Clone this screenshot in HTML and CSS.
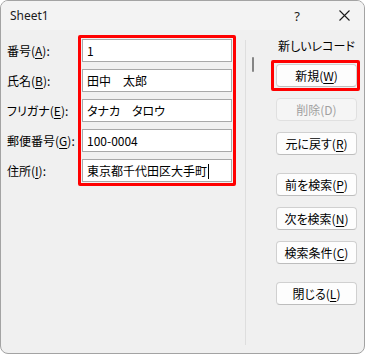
FILE: index.html
```html
<!DOCTYPE html>
<html lang="ja">
<head>
<meta charset="utf-8">
<title>Sheet1</title>
<link rel="stylesheet" href="styles.css">
</head>
<body>
<div class="window">
  <div class="titlebar">
    <span class="title">Sheet1</span>
    <span class="help">?</span>
    <span class="close"><svg width="11" height="11" viewBox="0 0 11 11"><path d="M0.5 0.5 L10.5 10.5 M10.5 0.5 L0.5 10.5" stroke="#1a1a1a" stroke-width="1.1" fill="none"/></svg></span>
  </div>
  <div class="body">
    <div class="labels">
      <div class="label">番号(<u>A</u>):</div>
      <div class="label">氏名(<u>B</u>):</div>
      <div class="label">フリガナ(<u>E</u>):</div>
      <div class="label">郵便番号(<u>G</u>):</div>
      <div class="label">住所(<u>I</u>):</div>
    </div>
    <div class="fields">
      <div class="field">1</div>
      <div class="field">田中　太郎</div>
      <div class="field">タナカ　タロウ</div>
      <div class="field">100-0004</div>
      <div class="field">東京都千代田区大手町<span class="caret"></span></div>
    </div>
    <div class="scroll"><div class="thumb"></div></div>
    <div class="actions">
      <div class="caption">新しいレコード</div>
      <div class="btn hl">新規(<u>W</u>)</div>
      <div class="btn disabled">削除(D)</div>
      <div class="btn">元に戻す(<u>R</u>)</div>
      <div class="btn group">前を検索(<u>P</u>)</div>
      <div class="btn">次を検索(<u>N</u>)</div>
      <div class="btn">検索条件(<u>C</u>)</div>
      <div class="btn group">閉じる(<u>L</u>)</div>
    </div>
  </div>
</div>
</body>
</html>
```
FILE: styles.css
```css
html, body {
  margin: 0;
  padding: 0;
  background: #ffffff;
}
.window {
  box-sizing: border-box;
  width: 365px;
  height: 354px;
  border: 1px solid #a3a3a3;
  border-radius: 8px;
  background: #f0f0f0;
  overflow: hidden;
  display: flex;
  flex-direction: column;
  font-family: "Noto Sans CJK JP", sans-serif;
  font-feature-settings: "palt";
  font-size: 12px;
  color: #000;
}
.titlebar {
  height: 29px;
  flex: none;
  display: flex;
  align-items: center;
  background: #f3f3f3;
}
.title {
  font-family: "Noto Sans", sans-serif;
  font-size: 12px;
  margin-left: 9px;
  flex: 1;
  color: #1a1a1a;
}
.help {
  font-family: "Noto Sans", sans-serif;
  font-size: 13px;
  width: 20px;
  text-align: center;
  color: #1a1a1a;
}
.close {
  width: 11px;
  height: 11px;
  margin-left: 32px;
  margin-right: 14px;
  display: flex;
}
.body {
  flex: 1;
  display: flex;
  padding-left: 6px;
}
.labels {
  width: 71px;
  padding-top: 9px;
  display: flex;
  flex-direction: column;
  gap: 7px;
}
.label {
  height: 23px;
  line-height: 23px;
  white-space: nowrap;
}
u {
  text-decoration-thickness: 1px;
  text-underline-offset: 2px;
}
.fields {
  margin-top: 5px;
  align-self: flex-start;
  border: 3px solid #ff0000;
  border-radius: 2px;
  padding: 1px;
  width: 150px;
  display: flex;
  flex-direction: column;
  gap: 7px;
}
.field {
  box-sizing: border-box;
  height: 23px;
  background: #ffffff;
  border: 1px solid #a8a8a8;
  padding-left: 4px;
  line-height: 21px;
  white-space: nowrap;
  font-size: 12px;
}
.caret {
  display: inline-block;
  width: 1px;
  height: 15px;
  background: #000;
  vertical-align: -3px;
  margin-left: 1px;
}
.scroll {
  margin-left: 9px;
  margin-top: 10px;
  margin-bottom: 8px;
  width: 30px;
  border-left: 1px solid #dedede;
}
.thumb {
  margin-left: 6px;
  margin-top: 17px;
  width: 2px;
  height: 15px;
  background: #858585;
  border-radius: 1px;
}
.actions {
  width: 81px;
  padding-top: 8px;
  display: flex;
  flex-direction: column;
  gap: 11px;
}
.caption {
  height: 16px;
  line-height: 16px;
  text-align: center;
  margin-bottom: -1px;
  white-space: nowrap;
}
.btn {
  box-sizing: border-box;
  height: 23px;
  line-height: 21px;
  background: #fdfdfd;
  border: 1px solid #d0d0d0;
  border-bottom-color: #bdbdbd;
  border-radius: 4px;
  text-align: center;
  white-space: nowrap;
}
.btn.disabled {
  color: #a0a0a0;
  background: #f5f5f5;
  border-color: #e0e0e0;
}
.btn.group {
  margin-top: 7px;
}
.hl {
  position: relative;
}
.hl::after {
  content: "";
  position: absolute;
  top: -5px;
  bottom: -5px;
  left: -6px;
  right: -4px;
  border: 3px solid #ff0000;
  border-radius: 2px;
}
```
